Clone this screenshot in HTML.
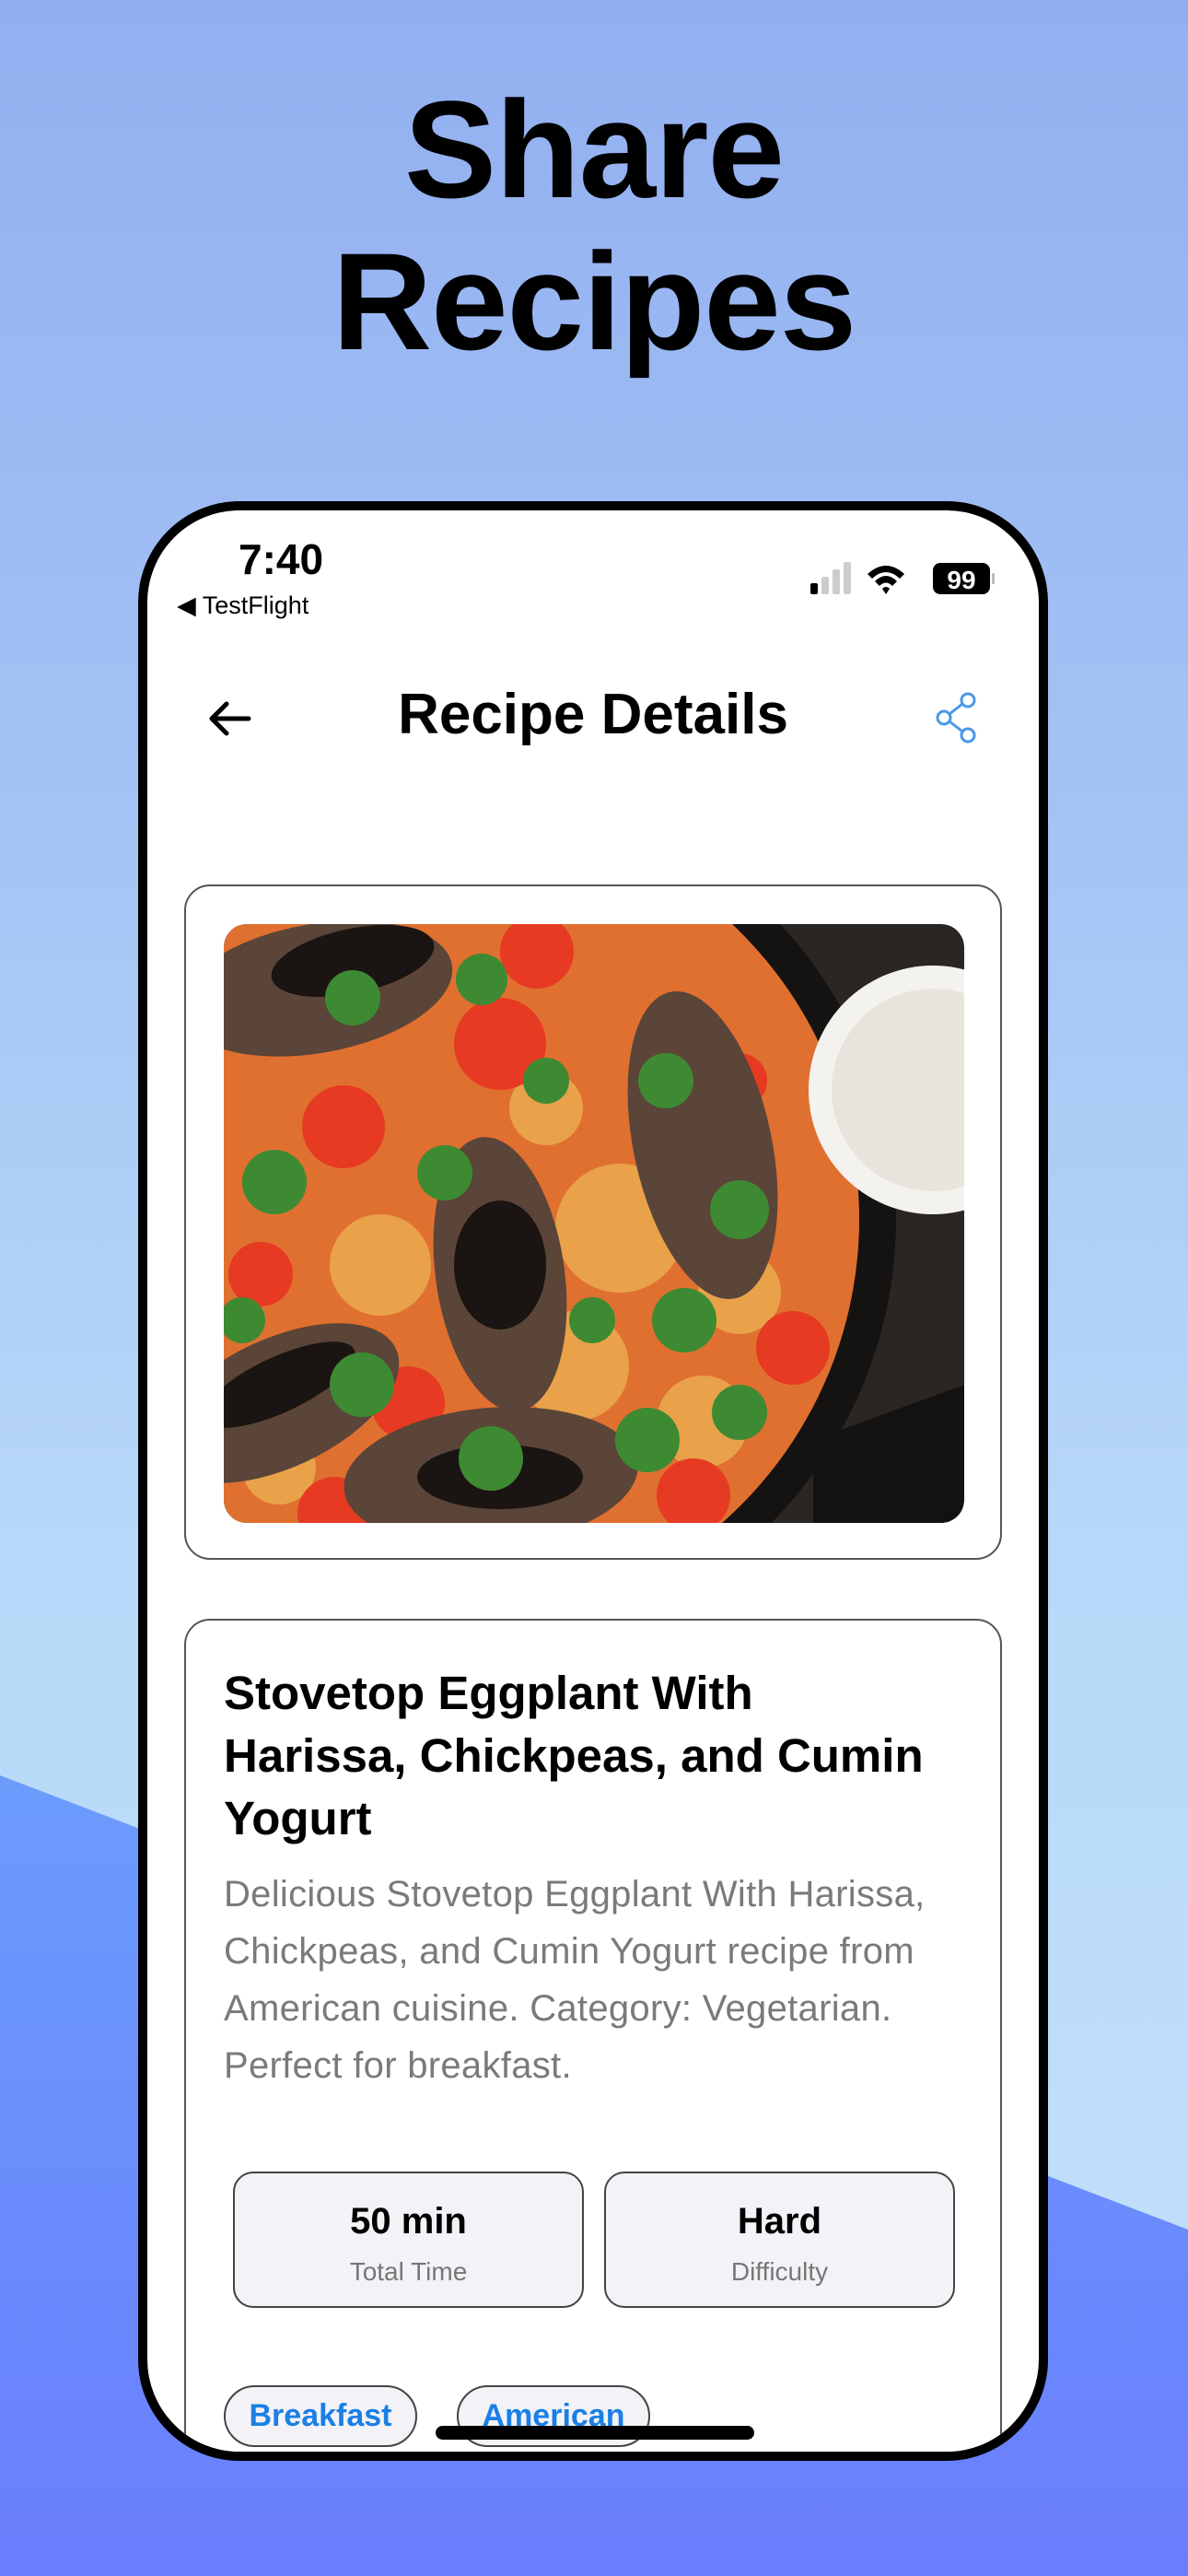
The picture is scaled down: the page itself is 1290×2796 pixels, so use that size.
<!DOCTYPE html>
<html><head><meta charset="utf-8"><style>
*{margin:0;padding:0;box-sizing:border-box}
body{width:1290px;height:2796px;position:relative;overflow:hidden;font-family:"Liberation Sans",sans-serif;background:linear-gradient(180deg,#92aff0 0%,#a3c2f4 30%,#b8d8f9 60%,#c2e2fb 100%)}
.bgpoly{position:absolute;left:0;top:0;width:1290px;height:2796px}
h1{position:absolute;left:0;width:1290px;text-align:center;font-weight:bold;font-size:150px;line-height:165px;top:80px;color:#000;letter-spacing:-1px}
.phone{position:absolute;left:150px;top:544px;width:988px;height:2127px;border:10px solid #000;border-radius:110px;background:#fff;overflow:hidden}
.abs{position:absolute}
.card{position:absolute;border:2px solid #555;border-radius:28px;background:#fff}
.stat{position:absolute;top:1803px;width:381px;height:148px;background:#f2f2f7;border:2px solid #444;border-radius:22px;text-align:center}
.stat b{display:block;font-size:40px;margin-top:30px;color:#000}
.stat span{display:block;font-size:28px;color:#777;margin-top:16px}
.tag{position:absolute;top:2035px;height:67px;width:210px;border:2px solid #444;border-radius:34px;background:#f2f2f7;color:#1a7fe6;font-size:34px;font-weight:bold;text-align:center;line-height:62px}
</style></head><body>
<svg class="bgpoly" viewBox="0 0 1290 2796"><defs><linearGradient id="bl" x1="0" y1="0" x2="0" y2="1"><stop offset="0" stop-color="#6b9cfc"/><stop offset="1" stop-color="#6a7efd"/></linearGradient></defs><polygon points="0,1927 1290,2420 1290,2796 0,2796" fill="url(#bl)"/></svg>
<h1>Share<br>Recipes</h1>
<div class="phone">
 <div class="abs" style="left:99px;top:26px;font-size:46px;font-weight:bold;color:#000">7:40</div>
 <div class="abs" style="left:32px;top:88px;font-size:27px;color:#000">◀ TestFlight</div>
 <svg class="abs" style="left:720px;top:51px" width="370" height="50" viewBox="0 0 370 50">
  <rect x="0" y="28" width="8" height="12" rx="2" fill="#000"/><rect x="12" y="21" width="8" height="19" rx="2" fill="#ccc"/><rect x="24" y="13" width="8" height="27" rx="2" fill="#ccc"/><rect x="36" y="5" width="8" height="35" rx="2" fill="#ccc"/>
  <path d="M62 18 Q82 0 102 18 L97 23 Q82 9 67 23Z M70 26 Q82 14 94 26 L89 31 Q82 24 75 31Z M78 34 Q82 30 86 34 L82 40Z" fill="#000"/>
  <rect x="133" y="6" width="62" height="34" rx="8" fill="#000"/><text x="164" y="34" font-size="28" font-weight="bold" fill="#fff" text-anchor="middle" font-family="Liberation Sans">99</text><rect x="197" y="17" width="3" height="12" rx="1" fill="#bbb"/>
 </svg>
 <svg class="abs" style="left:62px;top:201px" width="60" height="50" viewBox="0 0 60 50"><path d="M48 25H8M24 9L8 25L24 41" stroke="#000" stroke-width="5" fill="none" stroke-linecap="round" stroke-linejoin="round"/></svg>
 <div class="abs" style="left:0;width:968px;text-align:center;top:186px;font-size:62px;font-weight:bold;color:#000">Recipe Details</div>
 <svg class="abs" style="left:855px;top:197px" width="50" height="56" viewBox="0 0 50 56"><g stroke="#4a98e8" stroke-width="3" fill="none"><circle cx="36" cy="9" r="7"/><circle cx="10" cy="28" r="7"/><circle cx="36" cy="47" r="7"/><path d="M16 24L30 13M16 32L30 43"/></g></svg>
 <div class="card" style="left:40px;top:406px;width:888px;height:733px"></div>
 <svg class="abs" style="left:83px;top:449px;border-radius:25px" width="804" height="650" viewBox="0 0 804 650">
  <defs><clipPath id="c"><rect width="804" height="650" rx="25"/></clipPath></defs>
  <g clip-path="url(#c)">
   <rect width="804" height="650" fill="#2a2624"/>
   <circle cx="260" cy="320" r="470" fill="#151312"/>
   <path d="M640 560 L804 500 L804 650 L640 650Z" fill="#141211"/>
   <circle cx="250" cy="320" r="440" fill="#e07030"/>
   <g fill="#e9a24a"><circle cx="350" cy="200" r="40"/><circle cx="430" cy="330" r="70"/><circle cx="380" cy="480" r="60"/><circle cx="520" cy="540" r="50"/><circle cx="170" cy="370" r="55"/><circle cx="560" cy="400" r="45"/><circle cx="60" cy="590" r="40"/></g>
   <g fill="#e63a22"><circle cx="130" cy="220" r="45"/><circle cx="300" cy="130" r="50"/><circle cx="340" cy="30" r="40"/><circle cx="40" cy="380" r="35"/><circle cx="200" cy="520" r="40"/><circle cx="618" cy="460" r="40"/><circle cx="510" cy="620" r="40"/><circle cx="120" cy="640" r="40"/><circle cx="560" cy="170" r="30"/></g>
   <g fill="#5a4538"><ellipse cx="100" cy="70" rx="150" ry="70" transform="rotate(-10 100 70)"/><ellipse cx="300" cy="380" rx="70" ry="150" transform="rotate(-8 300 380)"/><ellipse cx="520" cy="240" rx="75" ry="170" transform="rotate(-12 520 240)"/><ellipse cx="60" cy="520" rx="140" ry="70" transform="rotate(-25 60 520)"/><ellipse cx="290" cy="600" rx="160" ry="75" transform="rotate(-5 290 600)"/></g>
   <g fill="#1a1412"><ellipse cx="140" cy="40" rx="90" ry="35" transform="rotate(-12 140 40)"/><ellipse cx="300" cy="370" rx="50" ry="70"/><ellipse cx="60" cy="500" rx="90" ry="30" transform="rotate(-25 60 500)"/><ellipse cx="300" cy="600" rx="90" ry="35"/></g>
   <g fill="#3e8a32"><circle cx="140" cy="80" r="30"/><circle cx="280" cy="60" r="28"/><circle cx="350" cy="170" r="25"/><circle cx="480" cy="170" r="30"/><circle cx="240" cy="270" r="30"/><circle cx="55" cy="280" r="35"/><circle cx="560" cy="310" r="32"/><circle cx="500" cy="430" r="35"/><circle cx="150" cy="500" r="35"/><circle cx="400" cy="430" r="25"/><circle cx="460" cy="560" r="35"/><circle cx="290" cy="580" r="35"/><circle cx="20" cy="430" r="25"/><circle cx="560" cy="530" r="30"/></g>
   <circle cx="770" cy="180" r="135" fill="#f4f2ee"/><circle cx="770" cy="180" r="110" fill="#e8e4dc"/>
  </g>
 </svg>
 <div class="card" style="left:40px;top:1203px;width:888px;height:1100px"></div>
 <div class="abs" style="left:83px;top:1250px;white-space:nowrap;font-size:51px;font-weight:bold;line-height:68px;color:#000">Stovetop Eggplant With<br>Harissa, Chickpeas, and Cumin<br>Yogurt</div>
 <div class="abs" style="left:83px;top:1471px;white-space:nowrap;font-size:40px;letter-spacing:0.3px;line-height:62px;color:#7a7a7a">Delicious Stovetop Eggplant With Harissa,<br>Chickpeas, and Cumin Yogurt recipe from<br>American cuisine. Category: Vegetarian.<br>Perfect for breakfast.</div>
 <div class="stat" style="left:93px"><b>50 min</b><span>Total Time</span></div>
 <div class="stat" style="left:496px"><b>Hard</b><span>Difficulty</span></div>
 <div class="tag" style="left:83px">Breakfast</div>
 <div class="tag" style="left:336px">American</div>
 <div class="abs" style="left:313px;top:2079px;width:346px;height:15px;border-radius:8px;background:#000"></div>
</div>
</body></html>
